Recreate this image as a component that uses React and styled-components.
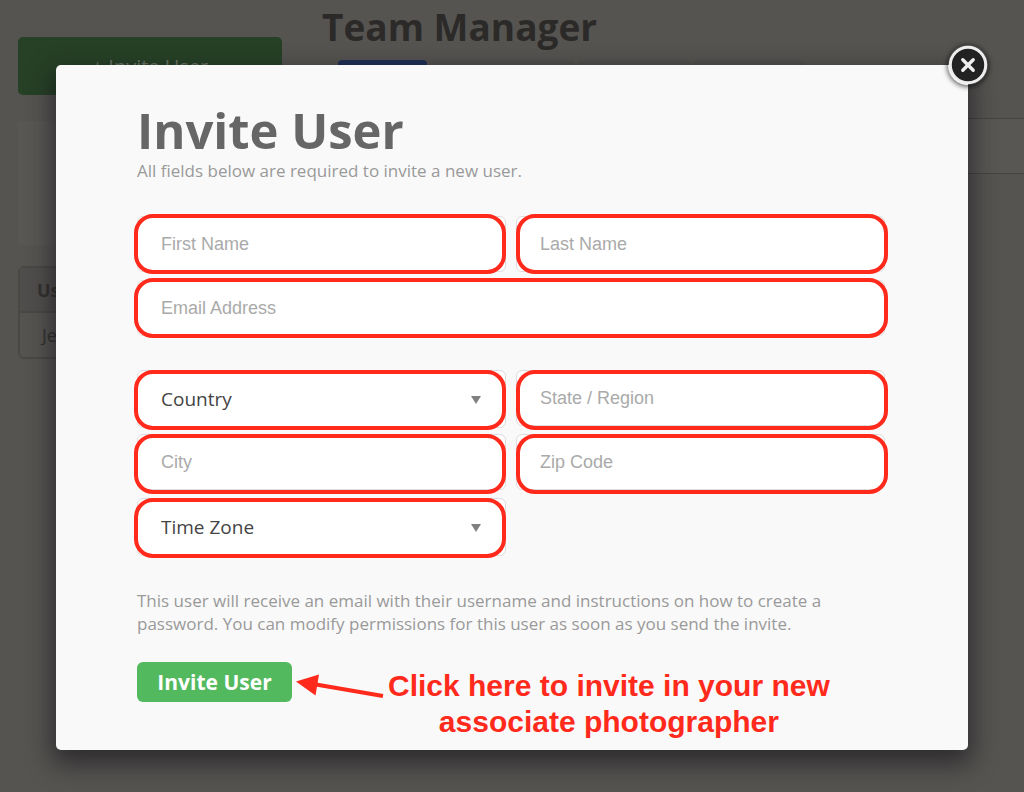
import React, { useState } from 'react';
import styled, { createGlobalStyle } from 'styled-components';

const RED = '#ff2a1b';

const GlobalStyle = createGlobalStyle`
    * {
        box-sizing: border-box;
    }
    body {
        margin: 0;
        background-color: #565451;
        font-family: 'Open Sans', sans-serif;
    }
    h1, h2, p {
        margin: 0;
    }
`;

const Page = styled.div`
    position: relative;
    min-height: 100vh;
    overflow: hidden;
`;

const Background = styled.div`
    position: absolute;
    inset: 0;
    display: flex;
    gap: 40px;
    padding-left: 18px;
`;

const Sidebar = styled.aside`
    width: 264px;
    flex-shrink: 0;
    padding-top: 37px;
`;

const SidebarButton = styled.button`
    display: block;
    width: 100%;
    height: 58px;
    border: 0;
    border-radius: 5px;
    background-color: #264126;
    color: #6a7567;
    font-family: inherit;
    font-size: 20px;
`;

const SidebarPanel = styled.div`
    height: 124px;
    margin: 26px 0 21px;
    border-radius: 4px;
    background-color: #595754;
`;

const UserTable = styled.table`
    width: 100%;
    border: 2px solid #4a4845;
    border-radius: 6px;
    border-spacing: 0;
    font-size: 18px;
    color: #33312f;
`;

const HeadCell = styled.th`
    height: 45px;
    padding: 0 17px;
    border-bottom: 2px solid #4a4845;
    background-color: #504e4c;
    text-align: left;
`;

const Cell = styled.td`
    height: 44px;
    padding: 0 22px;
`;

const Main = styled.main`
    flex: 1;
`;

const PageTitle = styled.h1`
    height: 60px;
    font-size: 37px;
    line-height: 54px;
    color: #2b2a28;
`;

const Tabs = styled.div`
    display: flex;
    gap: 3px;
    height: 58px;
    padding: 0 16px;
`;

const Tab = styled.div`
    width: ${({ $width }) => $width}px;
    height: 40px;
    border-radius: 4px;
    background-color: ${({ $active }) => ($active ? '#1f2f57' : '#52504d')};
`;

const Strip = styled.div`
    height: 56px;
    border-top: 1px solid #464441;
    border-bottom: 1px solid #464441;
    background-color: #595754;
`;

const Modal = styled.div`
    position: relative;
    margin: 65px 56px 42px;
    padding: 37px 83px 10px 81px;
    border-radius: 5px;
    background-color: #f9f9f9;
    box-shadow: 0 10px 25px 4px rgba(20, 18, 25, 0.6);
`;

const CloseButton = styled.button`
    position: absolute;
    top: -20px;
    right: -20px;
    width: 40px;
    height: 40px;
    padding: 0;
    border: 0;
    border-radius: 50%;
    background: none;
    box-shadow: 0 1px 5px 1px rgba(0, 0, 0, 0.6);
    cursor: pointer;

    svg {
        display: block;
    }
`;

const Title = styled.h2`
    font-size: 49px;
    line-height: 57px;
    color: #666;
`;

const Text = styled.p`
    font-size: 17px;
    line-height: 23px;
    color: #999;
`;

const FieldGroup = styled.div`
    display: grid;
    grid-template-columns: 1fr 1fr;
    gap: 4px 10px;
    align-items: ${({ $align }) => $align};
    margin-top: 32px;
`;

const ringSides = {
    left: '0 0 0 -3px',
    right: '0 -3px 0 0',
    both: '0 -3px 0 -3px',
};

const Field = styled.label`
    position: relative;
    display: flex;
    align-items: inherit;
    height: 60px;
    grid-column: ${({ $ring }) => ($ring === 'both' ? '1 / -1' : 'auto')};

    &::after {
        content: '';
        position: absolute;
        inset: ${({ $ring }) => ringSides[$ring]};
        border: 4px solid ${RED};
        border-radius: 19px;
        pointer-events: none;
    }
`;

const Input = styled.input`
    width: 100%;
    height: 56px;
    padding: 0 23px;
    border: 1px solid #ddd;
    border-radius: 6px;
    background-color: #fff;
    font-family: 'Liberation Sans', sans-serif;
    font-size: 18px;
    color: #444;
    outline: none;

    &::placeholder {
        color: #aaa;
        opacity: 1;
    }
`;

const Select = styled.select`
    width: 100%;
    height: 58px;
    padding: 0 23px;
    border: 1px solid #ddd;
    border-radius: 6px;
    background-color: #fff;
    appearance: none;
    font-family: inherit;
    font-size: 19px;
    color: #444;
    outline: none;
`;

const Caret = styled.svg`
    position: absolute;
    top: 26px;
    right: 25px;
    pointer-events: none;
`;

const Notice = styled(Text)`
    margin-top: 31px;
`;

const Actions = styled.div`
    display: flex;
    align-items: flex-start;
    margin-top: 27px;
`;

const SubmitButton = styled.button`
    width: 155px;
    height: 40px;
    padding: 0;
    border: 0;
    border-radius: 6px;
    background-color: #53b95f;
    color: #fff;
    font-family: inherit;
    font-size: 21px;
    font-weight: 700;
    cursor: pointer;
`;

const Arrow = styled.svg`
    flex-shrink: 0;
    margin: 9px 4px 0;
`;

const Hint = styled.p`
    padding-top: 6px;
    font-family: 'Liberation Sans', sans-serif;
    font-size: 30px;
    font-weight: 700;
    line-height: 36px;
    text-align: center;
    white-space: nowrap;
    color: ${RED};
`;

const TextField = ({ label, ring, value, onChange }) => (
    <Field $ring={ring}>
        <Input type="text" aria-label={label} placeholder={label} value={value} onChange={onChange} />
    </Field>
);

const SelectField = ({ label, ring }) => (
    <Field $ring={ring}>
        <Select aria-label={label}>
            <option>{label}</option>
        </Select>
        <Caret width="10" height="8" viewBox="0 0 10 8">
            <path d="M0 0h10L5 8z" fill="#808080" />
        </Caret>
    </Field>
);

const App = () => {
    const [form, setForm] = useState({ first: '', last: '', email: '', state: '', city: '', zip: '' });

    const bind = (name) => ({
        value: form[name],
        onChange: (e) => setForm((prev) => ({ ...prev, [name]: e.target.value })),
    });

    return (
        <>
            <GlobalStyle />
            <Page>
                <Background>
                    <Sidebar>
                        <SidebarButton type="button">+ Invite User</SidebarButton>
                        <SidebarPanel />
                        <UserTable>
                            <thead>
                                <tr>
                                    <HeadCell>Users</HeadCell>
                                </tr>
                            </thead>
                            <tbody>
                                <tr>
                                    <Cell>Jen</Cell>
                                </tr>
                            </tbody>
                        </UserTable>
                    </Sidebar>
                    <Main>
                        <PageTitle>Team Manager</PageTitle>
                        <Tabs>
                            <Tab $width={89} $active />
                            <Tab $width={144} />
                            <Tab $width={114} />
                            <Tab $width={110} />
                        </Tabs>
                        <Strip />
                    </Main>
                </Background>
                <Modal role="dialog" aria-label="Invite User">
                    <CloseButton type="button" aria-label="Close">
                        <svg width="40" height="40" viewBox="0 0 40 40">
                            <circle cx="20" cy="20" r="17.7" fill="#222" stroke="#eee" strokeWidth="3" />
                            <path
                                d="M14.8 14.8l10.4 10.4M25.2 14.8L14.8 25.2"
                                stroke="#eee"
                                strokeWidth="3.4"
                                strokeLinecap="round"
                            />
                        </svg>
                    </CloseButton>
                    <Title>Invite User</Title>
                    <Text>All fields below are required to invite a new user.</Text>
                    <form onSubmit={(e) => e.preventDefault()}>
                        <FieldGroup $align="center">
                            <TextField label="First Name" ring="left" {...bind('first')} />
                            <TextField label="Last Name" ring="right" {...bind('last')} />
                            <TextField label="Email Address" ring="both" {...bind('email')} />
                        </FieldGroup>
                        <FieldGroup $align="start">
                            <SelectField label="Country" ring="left" />
                            <TextField label="State / Region" ring="right" {...bind('state')} />
                            <TextField label="City" ring="left" {...bind('city')} />
                            <TextField label="Zip Code" ring="right" {...bind('zip')} />
                            <SelectField label="Time Zone" ring="left" />
                        </FieldGroup>
                        <Notice>
                            This user will receive an email with their username and instructions on how to create a
                            password. You can modify permissions for this user as soon as you send the invite.
                        </Notice>
                        <Actions>
                            <SubmitButton type="submit">Invite User</SubmitButton>
                            <Arrow width="88" height="28" viewBox="0 0 88 28">
                                <path d="M20 13.5L87 25" stroke={RED} strokeWidth="4" fill="none" />
                                <path d="M0 10.5L23 3.5L19.5 24.5z" fill={RED} />
                            </Arrow>
                            <Hint>
                                Click here to invite in your new
                                <br />
                                associate photographer
                            </Hint>
                        </Actions>
                    </form>
                </Modal>
            </Page>
        </>
    );
};

export default App;
